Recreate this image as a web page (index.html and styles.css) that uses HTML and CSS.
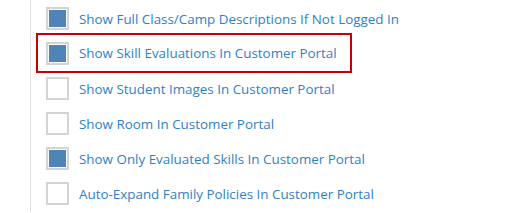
FILE: index.html
```html
<!DOCTYPE html>
<html lang="en">
<head>
    <meta charset="UTF-8">
    <title>Portal Settings</title>
    <link rel="stylesheet" href="styles.css">
</head>
<body>
    <div class="panel">
        <ul class="options">
            <li class="option">
                <span class="box checked"></span>
                <span class="label">Show Full Class/Camp Descriptions If Not Logged In</span>
            </li>
            <li class="option highlight">
                <span class="box checked"></span>
                <span class="label">Show Skill Evaluations In Customer Portal</span>
            </li>
            <li class="option">
                <span class="box"></span>
                <span class="label">Show Student Images In Customer Portal</span>
            </li>
            <li class="option">
                <span class="box"></span>
                <span class="label">Show Room In Customer Portal</span>
            </li>
            <li class="option">
                <span class="box checked"></span>
                <span class="label">Show Only Evaluated Skills In Customer Portal</span>
            </li>
            <li class="option">
                <span class="box"></span>
                <span class="label">Auto-Expand Family Policies In Customer Portal</span>
            </li>
        </ul>
    </div>
</body>
</html>
```

FILE: styles.css
```css
body {
    margin: 0;
    background: #fff;
    font-family: "Open Sans", Arial, sans-serif;
}

.panel {
    margin-left: 30px;
    border-left: 1px solid #e2e2e2;
    height: 211px;
    padding-top: 1px;
}

.options {
    list-style: none;
    margin: 0;
    padding: 0;
}

.option {
    display: flex;
    align-items: center;
    height: 35px;
    margin-left: 5px;
    padding-left: 8px;
    width: 316px;
    border: 2px solid transparent;
    box-sizing: border-box;
}

.option.highlight {
    border-color: #c80000;
    height: 40px;
    margin: -3px 0 -2px 5px;
}

.box {
    width: 23px;
    height: 23px;
    box-sizing: border-box;
    border: 2px solid #d4d4d4;
    padding: 1px;
    background: #fff;
    background-clip: content-box;
    flex-shrink: 0;
}

.box.checked {
    background-color: #4f84b8;
}

.label {
    margin-left: 10px;
    font-size: 13.4px;
    color: #2f7fc6;
    white-space: nowrap;
}
```
